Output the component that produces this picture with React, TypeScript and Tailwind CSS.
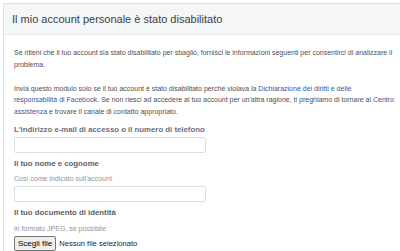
export default function App() {
  const font = {fontFamily: '"Liberation Sans", Arial, sans-serif'};
  return (
    <div className="w-[400px] h-[251px] overflow-hidden bg-white" style={font}>
      <div className="ml-[3px] mt-[3px] w-[420px] border-l border-t border-[#dddfe2]">
        {/* Header */}
        <div className="h-[31px] bg-[#f5f6f7] border-b border-[#e9ebee] px-[8px] flex items-center">
          <h1 className="text-[11px] text-[#3b3f46]">Il mio account personale è stato disabilitato</h1>
        </div>

        {/* Body */}
        <div className="pl-[10px] pt-[12px] w-[391px] text-[7px] leading-[11.5px] text-[#4b4f56]">
          <p>
            Se ritieni che il tuo account sia stato disabilitato per sbaglio, fornisci le informazioni seguenti per consentirci di analizzare il problema.
          </p>
          <p className="mt-[12.5px]">
            Invia questo modulo solo se il tuo account è stato disabilitato perché violava la{" "}
            <a className="text-[#365899]">Dichiarazione dei diritti e delle responsabilità di Facebook</a>. Se non riesci ad accedere al tuo account per un'altra ragione, ti preghiamo di tornare al{" "}
            <a className="text-[#365899]">Centro assistenza</a> e trovare il canale di contatto appropriato.
          </p>

          <label className="block mt-[7px] text-[7.8px] leading-[12px] font-bold text-[#6b7078]">
            L'indirizzo e-mail di accesso o il numero di telefono
          </label>
          <div className="mt-[1px] w-[192px] h-[16px] border border-[#dddfe2] rounded-[2px]" />

          <label className="block mt-[5px] text-[7.8px] leading-[12px] font-bold text-[#5a5f67]">
            Il tuo nome e cognome
          </label>
          <div className="mt-[2.5px] leading-[11px] text-[#90949c]">Così come indicato sull'account</div>
          <div className="mt-[2.5px] w-[192px] h-[16px] border border-[#dddfe2] rounded-[2px]" />

          <label className="block mt-[5px] text-[7.8px] leading-[12px] font-bold text-[#5a5f67]">
            Il tuo documento di identità
          </label>
          <div className="mt-[3.5px] leading-[11px] text-[#90949c]">in formato JPEG, se possibile</div>
          <div className="mt-[2.5px] flex items-center gap-[3px]">
            <span className="h-[15px] px-[3px] flex items-center bg-[#efefef] border border-[#767676] rounded-[2px] text-[8px] text-black">
              Scegli file
            </span>
            <span className="text-[7.6px] text-[#222]">Nessun file selezionato</span>
          </div>
        </div>
      </div>
    </div>
  );
}
